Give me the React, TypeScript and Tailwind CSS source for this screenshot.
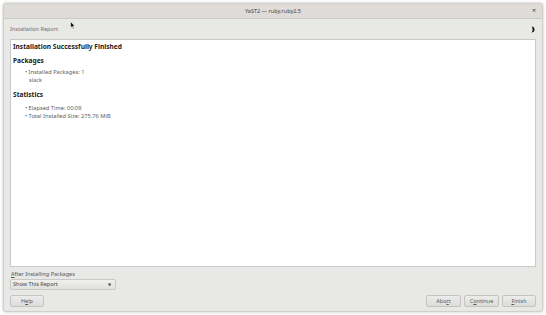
import React from "react";

const font = { fontFamily: '"Noto Sans", "DejaVu Sans", sans-serif' };

function Btn({ children, className = "" }: { children: React.ReactNode; className?: string }) {
  return (
    <div
      className={
        "h-[12px] flex items-center justify-center rounded-[2px] border border-[#c4c4c2] bg-gradient-to-b from-[#ececeb] to-[#dcdcda] text-[5.5px] text-[#5a5a5a] " +
        className
      }
    >
      {children}
    </div>
  );
}

export default function App() {
  return (
    <div className="w-[546px] h-[315px] bg-white pt-[3px] px-[3px] pb-[3px]" style={font}>
      <div className="w-full h-full flex flex-col bg-[#e8e8e7] border border-[#cfcfcd] rounded-[3px] shadow-[0_0_3px_rgba(0,0,0,0.25)] overflow-hidden">
        {/* title bar */}
        <div className="h-[15px] flex-none relative flex items-center justify-center bg-[#dedbd8] border-b border-[#cdcac6]">
          <span className="text-[5.5px] text-[#444]">YaST2 — ruby.ruby2.5</span>
          <span className="absolute right-[6px] top-[2px] text-[7px] leading-[9px] text-[#444]">×</span>
        </div>

        {/* header */}
        <div className="h-[20px] flex-none flex items-center justify-between pl-[6px] pr-[7px] relative">
          <span className="text-[5.5px] text-[#707070]">Installation Report</span>
          <svg width="6" height="7" viewBox="0 0 6 7" className="mr-[-1px]">
            <path d="M1.5 0.5 A3 3 0 0 1 1.5 6.5 A2.2 3 0 0 0 2.6 3.5 A2.2 3 0 0 0 1.5 0.5 Z" fill="#111" />
          </svg>
          <svg width="6" height="9" viewBox="0 0 6 9" className="absolute left-[66px] top-[2px]">
            <path d="M0.5 0.5 L0.5 7 L2 5.5 L3.2 8 L4.2 7.5 L3 5.2 L5 5.2 Z" fill="#111" stroke="#fff" strokeWidth="0.6" />
          </svg>
        </div>

        {/* content panel */}
        <div className="flex-1 mx-[6px] bg-white border border-[#c9c9c7] px-[2px] pt-[2px] text-[#222]">
          <div className="text-[6.6px] font-bold leading-[10px]">Installation Successfully Finished</div>
          <div className="text-[6.6px] font-bold leading-[10px] mt-[4px]">Packages</div>
          <div className="pl-[12px] mt-[3px] text-[5.7px] text-[#606060] leading-[7.5px]">
            <div>•&nbsp;Installed Packages: 1</div>
            <div className="pl-[4px]">slack</div>
          </div>
          <div className="text-[6.6px] font-bold leading-[10px] mt-[6px]">Statistics</div>
          <div className="pl-[12px] mt-[4px] text-[5.7px] text-[#606060] leading-[8px]">
            <div>•&nbsp;Elapsed Time: 00:09</div>
            <div>•&nbsp;Total Installed Size: 275.76 MiB</div>
          </div>
        </div>

        {/* footer */}
        <div className="flex-none px-[6px] pt-[3px] pb-[4px]">
          <div className="text-[5.5px] text-[#555] leading-[8px] pl-[1px]">
            <span className="underline">A</span>fter Installing Packages
          </div>
          <div className="mt-[1px] w-[106px] h-[11px] flex items-center justify-between rounded-[2px] border border-[#c8c8c6] bg-gradient-to-b from-[#f0f0ef] to-[#e0e0de] px-[2px] text-[5.5px] text-[#444]">
            <span>Show This Report</span>
            <span className="text-[4px] mr-[2px]">▼</span>
          </div>
          <div className="mt-[5px] flex items-center">
            <Btn className="w-[34px]">
              <span>
                H<span className="underline">e</span>lp
              </span>
            </Btn>
            <div className="flex-1" />
            <Btn className="w-[35px]">
              <span>
                Abo<span className="underline">r</span>t
              </span>
            </Btn>
            <Btn className="w-[35px] ml-[3px]">
              <span>
                C<span className="underline">o</span>ntinue
              </span>
            </Btn>
            <Btn className="w-[34px] ml-[3px]">
              <span>
                <span className="underline">F</span>inish
              </span>
            </Btn>
          </div>
        </div>
      </div>
    </div>
  );
}
